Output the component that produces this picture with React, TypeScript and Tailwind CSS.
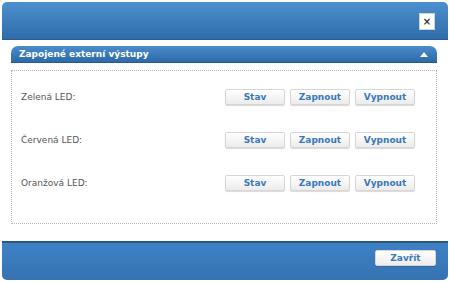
import React from "react";

const Btn = ({ label, w = "w-[60px]" }: { label: string; w?: string }) => (
  <button
    className={`${w} h-4 flex items-center justify-center rounded-[2px] border border-[#d6d6d6] bg-gradient-to-b from-[#ffffff] to-[#ececec] shadow-[0_1px_1px_rgba(0,0,0,0.15)] text-[9px] font-bold text-[#3b78b8] leading-none`}
    style={{ fontFamily: '"DejaVu Sans", Verdana, sans-serif' }}
  >
    {label}
  </button>
);

const Row = ({ label }: { label: string }) => (
  <div className="flex items-center h-4">
    <div className="flex-1 text-[9px] text-[#555555] leading-none pl-[9px]">{label}</div>
    <div className="flex gap-[5px] pr-[21px]">
      <Btn label="Stav" />
      <Btn label="Zapnout" />
      <Btn label="Vypnout" />
    </div>
  </div>
);

export default function App() {
  return (
    <div
      className="w-[450px] h-[282px] bg-white p-[2px] flex flex-col"
      style={{ fontFamily: '"DejaVu Sans", Verdana, sans-serif' }}
    >
      <div className="h-[38px] rounded-t-[5px] bg-gradient-to-b from-[#4d90d0] to-[#2f6ca9] border-b border-[#2a5c90] flex items-start justify-end pr-[13px] pt-[11px]">
        <div className="w-4 h-[17px] bg-white border border-[#c8d4e0] flex items-center justify-center text-[10px] font-bold text-[#333333] leading-none">
          ×
        </div>
      </div>
      <div className="flex-1 px-[9px] pt-[6px] pr-[11px]">
        <div className="h-[17px] rounded-t-[7px] bg-gradient-to-b from-[#4b8ccc] to-[#2d6aa7] border-b border-[#2a5a8c] flex items-center justify-between pl-2 pr-[9px]">
          <span className="text-[9px] font-bold text-white leading-none">Zapojené externí výstupy</span>
          <svg width="8" height="5" viewBox="0 0 8 5">
            <polygon points="4,0 8,5 0,5" fill="#ffffff" />
          </svg>
        </div>
        <div className="mt-[7px] h-[154px] border border-dotted border-[#b8b8b8] pt-[18px] flex flex-col gap-[27px]">
          <Row label="Zelená LED:" />
          <Row label="Červená LED:" />
          <Row label="Oranžová LED:" />
        </div>
      </div>
      <div className="h-[39px] rounded-b-[5px] bg-gradient-to-b from-[#3e82c6] to-[#3572b0] border-t-2 border-[#2a5680] flex items-start justify-end pr-[12px] pt-[7px]">
        <Btn label="Zavřít" w="w-[61px]" />
      </div>
    </div>
  );
}
